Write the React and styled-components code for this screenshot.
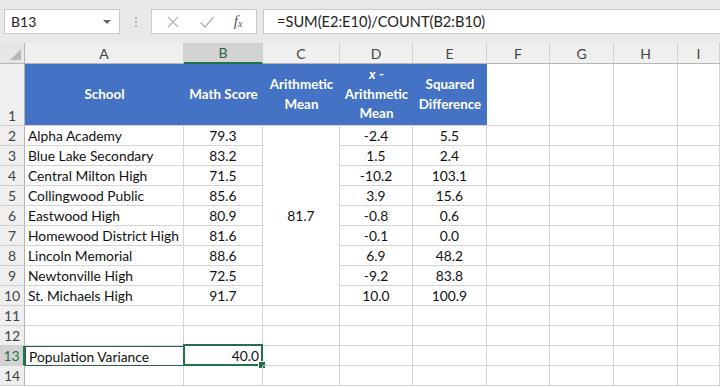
import React from 'react';
import styled, { createGlobalStyle, css } from 'styled-components';

const GREEN = '#217346';
const BLUE = '#4472c4';
const GRID = '#d4d4d4';
const FONT = `Lato, "Open Sans", "Liberation Sans", sans-serif`;

const GlobalStyle = createGlobalStyle`
  html, body {
    margin: 0;
    padding: 0;
    background: #fff;
    font-family: ${FONT};
  }
`;

const Page = styled.div`
  width: 720px;
  height: 388px;
  overflow: hidden;
`;

// formula bar
const Toolbar = styled.div`
  height: 43px;
  box-sizing: border-box;
  background: #e9e9e9;
  display: flex;
  align-items: flex-start;
  padding: 9px 0 0 4px;
`;

const NameBox = styled.div`
  width: 116px;
  height: 25px;
  box-sizing: border-box;
  background: #fff;
  border: 1px solid #c9c9c9;
  display: flex;
  align-items: center;
  justify-content: space-between;
  padding: 0 8px 0 6px;
  font-size: 14px;
  color: #222;
`;

const Caret = styled.span`
  width: 0;
  height: 0;
  border-left: 4px solid transparent;
  border-right: 4px solid transparent;
  border-top: 4px solid #666;
`;

const Grip = styled.div`
  width: 31px;
  height: 25px;
  display: flex;
  flex-direction: column;
  align-items: center;
  justify-content: center;
  gap: 2px;

  span {
    width: 2px;
    height: 2px;
    background: #b5b5b5;
  }
`;

const ButtonBox = styled.div`
  width: 106px;
  height: 25px;
  box-sizing: border-box;
  background: #fff;
  border: 1px solid #c9c9c9;
  display: flex;
  align-items: center;
  justify-content: space-around;
  padding: 0 4px;
`;

const Fx = styled.span`
  font-family: "Liberation Serif", "DejaVu Serif", serif;
  font-style: italic;
  font-size: 15px;
  color: #555;

  sub {
    font-size: 10px;
    vertical-align: -1px;
  }
`;

const FormulaBox = styled.div`
  flex: 1;
  height: 25px;
  margin-left: 6px;
  box-sizing: border-box;
  background: #fff;
  border: 1px solid #c9c9c9;
  border-right: none;
  display: flex;
  align-items: center;
  padding-left: 13px;
  font-size: 14.6px;
  color: #222;
`;

// sheet grid
const Sheet = styled.div`
  display: grid;
  grid-template-columns: 25px 159px 79px 77px 73px 74px 63px 64px 64px 1fr;
  grid-template-rows: 21px 62px repeat(13, 20px);
  font-size: 13.8px;
  color: #111;
`;

const Corner = styled.div`
  background: #e6e6e6;
  border-right: 1px solid #b5b5b5;
  border-bottom: 1px solid #b5b5b5;
  box-sizing: border-box;
  display: flex;
  align-items: flex-end;
  justify-content: flex-end;
  padding: 0 3px 3px 0;

  span {
    width: 0;
    height: 0;
    border-left: 11px solid transparent;
    border-bottom: 11px solid #b8b8b8;
  }
`;

const ColHeader = styled.div`
  box-sizing: border-box;
  background: #efefef;
  border-right: 1px solid #d0d0d0;
  border-bottom: 1px solid #b5b5b5;
  display: flex;
  align-items: center;
  justify-content: center;
  font-size: 14px;
  color: #444;

  ${p => p.$selected && css`
    background: #d3d3d3;
    color: #2f5e44;
    border-bottom: 2px solid ${GREEN};
  `}
`;

const RowHeader = styled.div`
  box-sizing: border-box;
  background: #efefef;
  border-right: 1px solid #b5b5b5;
  border-bottom: 1px solid #d0d0d0;
  display: flex;
  align-items: ${p => (p.$bottom ? 'flex-end' : 'center')};
  justify-content: center;
  padding-bottom: ${p => (p.$bottom ? '1px' : '0')};
  font-size: 14px;
  color: #444;

  ${p => p.$selected && css`
    background: #d3d3d3;
    color: ${GREEN};
    border-right: 2px solid ${GREEN};
  `}
`;

const HeadCell = styled.div`
  box-sizing: border-box;
  background: ${BLUE};
  border-bottom: 1px solid ${GRID};
  color: #fff;
  font-weight: 700;
  font-size: 13.4px;
  display: flex;
  align-items: center;
  justify-content: center;
  text-align: center;
  line-height: 19.5px;

  em {
    font-style: italic;
  }
`;

const Cell = styled.div`
  box-sizing: border-box;
  position: relative;
  border-right: 1px solid ${GRID};
  border-bottom: 1px solid ${GRID};
  display: flex;
  align-items: center;
  justify-content: ${p => ({ left: 'flex-start', right: 'flex-end' }[p.$align] || 'center')};
  padding: 0 3px;
  white-space: nowrap;
  grid-row: ${p => (p.$span ? `span ${p.$span}` : 'auto')};

  ${p => p.$outlined && css`
    border: 1px solid #2f5e58;
  `}
`;

const Selection = styled.div`
  position: absolute;
  left: -1px;
  top: -2px;
  right: -1px;
  bottom: -1px;
  border: 2px solid ${GREEN};
  pointer-events: none;
`;

const FillHandle = styled.div`
  position: absolute;
  right: -5px;
  bottom: -5px;
  width: 6px;
  height: 6px;
  background: ${GREEN};
  border: 1px solid #fff;
`;

const COLUMNS = ['A', 'B', 'C', 'D', 'E', 'F', 'G', 'H', 'I'];

const DATA = [
  ['Alpha Academy', '79.3', '-2.4', '5.5'],
  ['Blue Lake Secondary', '83.2', '1.5', '2.4'],
  ['Central Milton High', '71.5', '-10.2', '103.1'],
  ['Collingwood Public', '85.6', '3.9', '15.6'],
  ['Eastwood High', '80.9', '-0.8', '0.6'],
  ['Homewood District High', '81.6', '-0.1', '0.0'],
  ['Lincoln Memorial', '88.6', '6.9', '48.2'],
  ['Newtonville High', '72.5', '-9.2', '83.8'],
  ['St. Michaels High', '91.7', '10.0', '100.9'],
];

const XIcon = () => (
  <svg width="14" height="14" viewBox="0 0 14 14">
    <path d="M2 2 L12 12 M12 2 L2 12" stroke="#b8b8b8" strokeWidth="1.4" fill="none" />
  </svg>
);

const CheckIcon = () => (
  <svg width="16" height="14" viewBox="0 0 16 14">
    <path d="M1.5 7.5 L6 12 L14.5 2" stroke="#b8b8b8" strokeWidth="1.6" fill="none" />
  </svg>
);

const Blank = ({ n }) => Array.from({ length: n }, (_, i) => <Cell key={i} />);

export default function App() {
  return (
    <Page>
      <GlobalStyle />
      <Toolbar>
        <NameBox>
          B13
          <Caret />
        </NameBox>
        <Grip>
          <span />
          <span />
          <span />
        </Grip>
        <ButtonBox>
          <XIcon />
          <CheckIcon />
          <Fx>
            f<sub>x</sub>
          </Fx>
        </ButtonBox>
        <FormulaBox>=SUM(E2:E10)/COUNT(B2:B10)</FormulaBox>
      </Toolbar>

      <Sheet>
        <Corner>
          <span />
        </Corner>
        {COLUMNS.map(c => (
          <ColHeader key={c} $selected={c === 'B'}>
            {c}
          </ColHeader>
        ))}

        <RowHeader $bottom>1</RowHeader>
        <HeadCell>School</HeadCell>
        <HeadCell>Math Score</HeadCell>
        <HeadCell>
          Arithmetic
          <br />
          Mean
        </HeadCell>
        <HeadCell>
          <span>
            <em>x</em> -
            <br />
            Arithmetic
            <br />
            Mean
          </span>
        </HeadCell>
        <HeadCell>
          Squared
          <br />
          Difference
        </HeadCell>
        <Blank n={4} />

        {DATA.map(([school, score, diff, sq], i) => (
          <React.Fragment key={school}>
            <RowHeader>{i + 2}</RowHeader>
            <Cell $align="left">{school}</Cell>
            <Cell>{score}</Cell>
            {i === 0 && <Cell $span={9}>81.7</Cell>}
            <Cell>{diff}</Cell>
            <Cell>{sq}</Cell>
            <Blank n={4} />
          </React.Fragment>
        ))}

        <RowHeader>11</RowHeader>
        <Blank n={9} />
        <RowHeader>12</RowHeader>
        <Blank n={9} />

        <RowHeader $selected>13</RowHeader>
        <Cell $align="left" $outlined>
          Population Variance
        </Cell>
        <Cell $align="right">
          40.0
          <Selection>
            <FillHandle />
          </Selection>
        </Cell>
        <Blank n={7} />

        <RowHeader>14</RowHeader>
        <Blank n={9} />
      </Sheet>
    </Page>
  );
}
